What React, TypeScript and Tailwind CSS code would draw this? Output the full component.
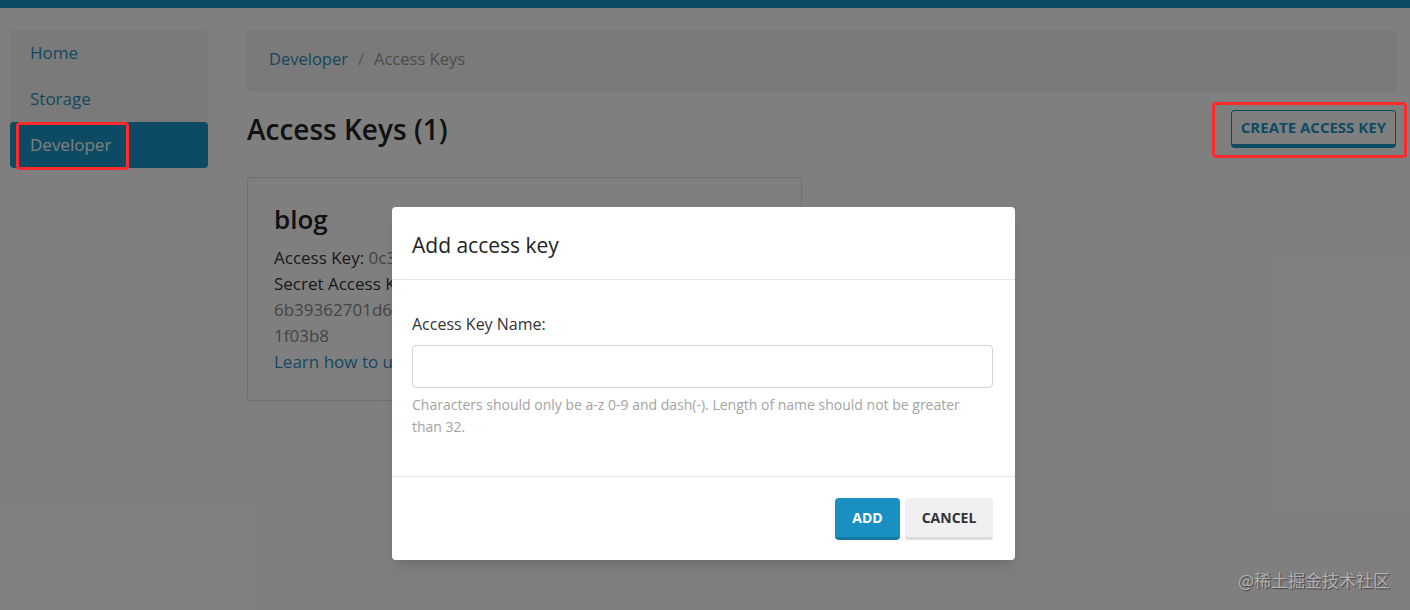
import React from "react";

const font = { fontFamily: '"Open Sans", "Noto Sans", sans-serif' };

function Sidebar() {
  const items = ["Home", "Storage", "Developer"];
  return (
    <nav className="w-[198px] shrink-0 self-start rounded bg-[#f4f4f4]">
      {items.map((item) => (
        <div
          key={item}
          className={
            item === "Developer"
              ? "flex h-[46px] items-center rounded bg-[#1a94c6] px-5 text-[17px] text-white"
              : "flex h-[46px] items-center px-5 text-[17px] text-[#2f8fbd]"
          }
        >
          {item}
        </div>
      ))}
    </nav>
  );
}

function KeyCard() {
  return (
    <div className="mt-[29px] h-[224px] w-[555px] rounded border border-[#dedede] px-[26px] pt-[23px] text-[17px] leading-[26px] text-[#333]">
      <div className="text-[26px] font-semibold leading-[36px] text-[#222]">blog</div>
      <div className="mt-[8px]">
        Access Key: <span className="text-[#888]">0c3e59a71f2b4d7c</span>
      </div>
      <div>Secret Access Key:</div>
      <div className="text-[#888]">6b39362701d64f8a0e3cc2b7d95a4e61</div>
      <div className="text-[#888]">1f03b8</div>
      <div className="text-[#2f8fbd]">Learn how to use access keys</div>
    </div>
  );
}

function Modal() {
  return (
    <div className="absolute inset-0 flex justify-center bg-black/50 pr-[3px]">
      <div className="mt-[207px] h-[353px] w-[623px] rounded bg-white shadow-lg">
        <div className="flex h-[73px] items-center border-b border-[#e5e5e5] px-5 pt-[5px] text-[21px] text-[#222]">
          Add access key
        </div>
        <div className="h-[197px] border-b border-[#e5e5e5] pl-5 pr-[22px] pt-[33px]">
          <label className="block text-[16px] leading-[22px] text-[#333]">Access Key Name:</label>
          <input
            type="text"
            className="mt-[10px] block h-[43px] w-full rounded border border-[#d4d4d4] bg-white px-3 outline-none"
          />
          <p className="mt-[6px] max-w-[566px] text-[14px] leading-[22px] text-[#a3a3a3]">
            Characters should only be a-z 0-9 and dash(-). Length of name should not be greater than 32.
          </p>
        </div>
        <div className="flex justify-end gap-[5px] pl-5 pr-[22px] pt-[21px]">
          <button className="h-[42px] w-[65px] rounded border-b-[3px] border-[#157aa3] bg-[#1a90c2] text-[14px] font-bold text-white">
            ADD
          </button>
          <button className="h-[42px] w-[88px] rounded border-b-[3px] border-[#dcdcdc] bg-[#f0f0f0] text-[14px] font-bold text-[#333]">
            CANCEL
          </button>
        </div>
      </div>
    </div>
  );
}

export default function App() {
  return (
    <div className="relative min-h-screen overflow-hidden bg-white" style={font}>
      <div className="h-[8px] bg-[#1a94c6]" />
      <div className="flex gap-[39px] pl-[10px] pr-[14px] pt-[22px]">
        <Sidebar />
        <main className="flex-1">
          <div className="flex h-[59px] items-center rounded bg-[#f4f4f4] px-[22px] text-[16.5px] shadow-sm">
            <span className="text-[#2f8fbd]">Developer</span>
            <span className="mx-[10px] text-[#aaa]">/</span>
            <span className="text-[#999]">Access Keys</span>
          </div>
          <div className="mt-[21px] flex items-center justify-between">
            <h1 className="text-[28px] font-semibold leading-[38px] text-[#222]">Access Keys (1)</h1>
            <button className="h-[38px] rounded border border-[#1a94c6] border-b-[4px] bg-white px-[9px] text-[15px] font-bold text-[#1a94c6]">
              CREATE ACCESS KEY
            </button>
          </div>
          <KeyCard />
        </main>
      </div>

      <Modal />

      <div className="pointer-events-none absolute left-[16px] top-[122px] h-[48px] w-[113px] rounded border-[3px] border-[#ff2b2b]" />
      <div className="pointer-events-none absolute left-[1212px] top-[102px] h-[56px] w-[195px] rounded border-[3px] border-[#ff2b2b]" />

      <div
        className="absolute bottom-[18px] right-[20px] text-[17px] text-[#b0b0b0]"
        style={{ fontFamily: '"Noto Sans CJK SC", "Noto Sans", sans-serif', textShadow: "1px 1px 1px rgba(0,0,0,0.45)" }}
      >
        @稀土掘金技术社区
      </div>
    </div>
  );
}
